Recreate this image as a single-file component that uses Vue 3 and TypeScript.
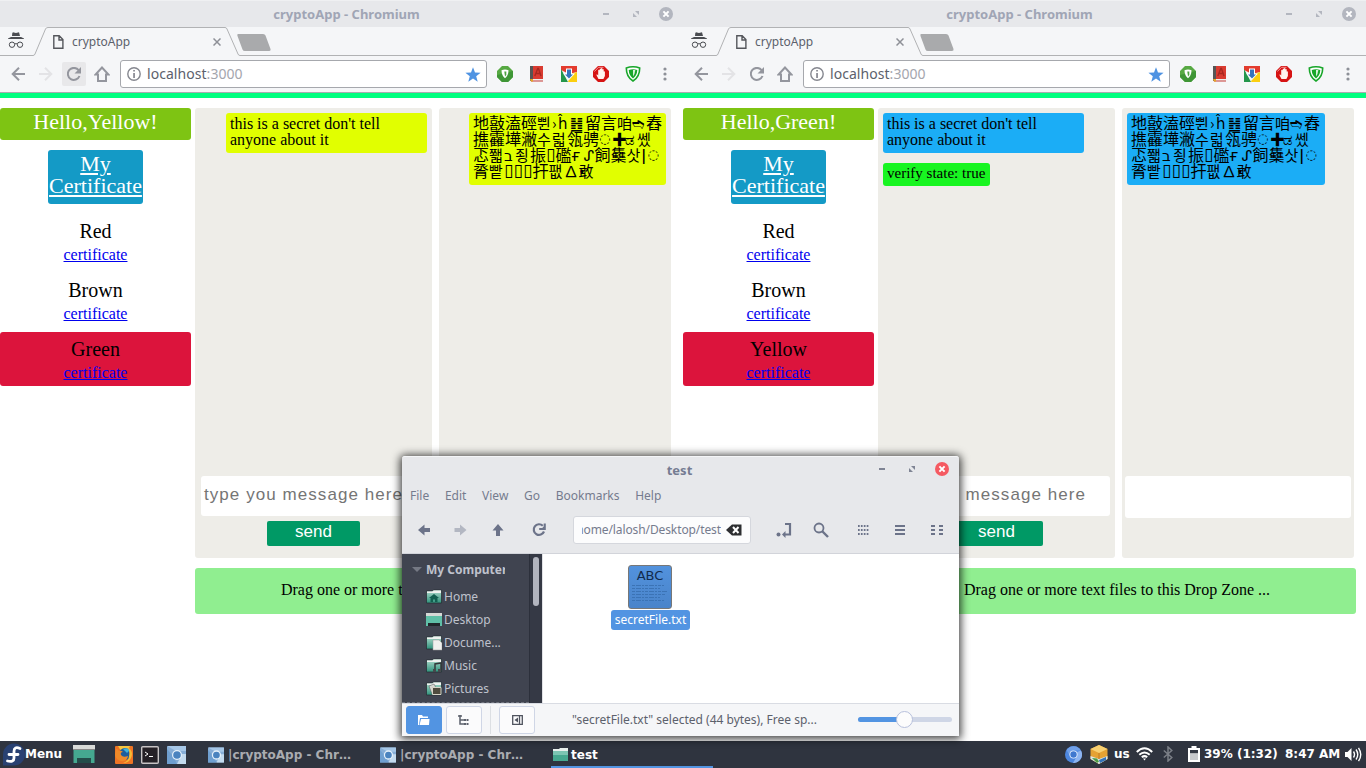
<script setup lang="ts">
interface Contact { name: string; active: boolean }
interface Win {
  user: string
  contacts: Contact[]
  mine: boolean
  verified: boolean
}
type Glyph = [string, number]

const windows: Win[] = [
  {
    user: 'Yellow',
    contacts: [{ name: 'Red', active: false }, { name: 'Brown', active: false }, { name: 'Green', active: true }],
    mine: true,
    verified: false,
  },
  {
    user: 'Green',
    contacts: [{ name: 'Red', active: false }, { name: 'Brown', active: false }, { name: 'Yellow', active: true }],
    mine: false,
    verified: true,
  },
]

// Each encrypted character with its advance width in pixels
const cipher: Glyph[][] = [
  [['地', 16], ['敼', 16], ['溘', 16], ['硜', 16], ['쀤', 15], ['›', 6], ['ĥ', 12], ['䷲', 15], ['留', 16], ['言', 16], ['咱', 15], ['➬', 14], ['舂', 16]],
  [['撨', 16], ['靃', 16], ['墷', 16], ['潎', 16], ['수', 15], ['럷', 15], ['瓴', 16], ['骋', 16], ['◌', 13], ['✚', 13], ['ಡ', 12], ['쎘', 15]],
  [['忑', 16], ['쫿', 15], ['ב', 11], ['죙', 15], ['振', 16], ['▯', 9.5], ['礛', 16], ['ғ', 12], ['ᔑ', 11], ['飼', 16], ['雧', 16], ['삿', 15], ['ǀ', 6], ['◌', 13]],
  [['脀', 16], ['빹', 15], ['▯', 9.5], ['▯', 9.5], ['▯', 9.5], ['扞', 16], ['팺', 15], ['∆', 11], ['·', 4], ['敢', 15]],
]

const places = ['Home', 'Desktop', 'Docume...', 'Music', 'Pictures']
const menus = ['File', 'Edit', 'View', 'Go', 'Bookmarks', 'Help']
const zoomLevel = 50
</script>

<template>
  <div class="desktop">
    <div class="browsers">
      <section v-for="w in windows" :key="w.user" class="browser">
        <header class="titlebar">
          <span class="wtitle">cryptoApp - Chromium</span>
          <svg class="wctl" width="80" height="18" viewBox="0 0 80 18">
            <rect x="3" y="8" width="6" height="2" fill="#b3b6bf" />
            <path d="M35 6h4v4zM33 8v4h4z" fill="#b3b6bf" />
            <circle cx="66" cy="9" r="7" fill="#b3b6bf" />
            <path d="M63.4 6.4l5.2 5.2M68.600 6.400l-5.200 5.200" stroke="#fff" stroke-width="2" />
          </svg>
        </header>
        <div class="tabs">
          <svg class="tabline" width="683" height="29" viewBox="0 0 683 29">
            <path d="M0 28.500H33Q34.500 28.500 35 27L45.500 2Q46 .5 48 .5H225Q226.500 .5 227 2L238 27Q238.500 28.500 240 28.500H683" fill="#f5f6f8" stroke="#b1b2b4" />
            <path d="M238 7H263Q265 7 265.500 8.500L270.500 22Q271 24 269 24H245Q243 24 242.500 22.500L237.500 9Q237 7 238 7Z" fill="#a9aaac" />
          </svg>
          <svg class="incog" width="16" height="17" viewBox="0 0 16 17" fill="none" stroke="#4b4d52">
            <path d="M4.300 1L5 .3 8 1 11 .3 12 4H4z" fill="#4b4d52" stroke="none" />
            <path d="M0 6.500L3 5H13L16 6.500V7H0z" fill="#4b4d52" stroke="none" />
            <circle cx="4" cy="12.700" r="2.700" /><circle cx="12" cy="12.700" r="2.700" /><path d="M6.700 12q1.300-.8 2.600 0" />
          </svg>
          <svg class="doc" width="11" height="14" viewBox="0 0 11 14" fill="none" stroke="#55575c" stroke-width="1.400">
            <path d="M.8.8H6.200L9.900 4.500V13.200H.8zM6 1V5H10" />
          </svg>
          <span class="tabname">cryptoApp</span>
          <svg class="tabx" width="8" height="8" viewBox="0 0 8 8"><path d="M.5.5l7 7M7.500.5l-7 7" stroke="#8e9097" stroke-width="1.500" /></svg>
        </div>
        <div class="toolbar">
          <svg class="i-back" width="14" height="14" viewBox="0 0 14 14" fill="none" stroke="#94969e" stroke-width="2"><path d="M14 7H1.500M8 .8L1.700 7 8 13.200" /></svg>
          <svg class="i-fwd" width="14" height="14" viewBox="0 0 14 14" fill="none" stroke="#e3e3e6" stroke-width="2"><path d="M0 7H12.500M6 .8L12.300 7 6 13.200" /></svg>
          <span class="reload" :class="{ hover: w.mine }">
            <svg width="14" height="14" viewBox="0 0 14 14"><path d="M11.600 3.200A6 6 0 1 0 12.500 9" fill="none" stroke="#94969e" stroke-width="2" /><path d="M14 0V6.500H7.500z" fill="#94969e" /></svg>
          </span>
          <svg class="i-home" width="16" height="16" viewBox="0 0 16 16" fill="none" stroke="#94969e" stroke-width="2"><path d="M8 1.500L1.500 8.500H4V15H12V8.500H14.500z" /></svg>
          <div class="url">
            <svg width="14" height="14" viewBox="0 0 14 14"><circle cx="7" cy="7" r="6.200" fill="none" stroke="#85878f" stroke-width="1.400" /><path d="M6.200 3h1.700v1.600H6.200zM6.200 6h1.700v5H6.200z" fill="#85878f" /></svg>
            <span class="host">localhost<i>:3000</i></span>
            <svg class="star" width="16" height="15" viewBox="0 0 16 15"><path d="M8 .3L10 5.500 15.600 5.800 11.200 9.300 12.700 14.700 8 11.600 3.300 14.700 4.800 9.300.4 5.800 6 5.500z" fill="#4f93e2" /></svg>
          </div>
          <div class="exts">
            <svg width="16" height="16" viewBox="0 0 16 16"><path d="M5 0h6l5 5v6l-5 5H5l-5-5V5z" fill="#57a943" /><path d="M0 9l16-4v6l-5 5H5l-5-5z" fill="#3f9636" /><path d="M4.500 4.200q3.500-1.200 7 0 0 5-3.500 8Q4.500 9.200 4.500 4.200z" fill="#fff" /><path d="M7.300 5.500h2V9L8 10.500z" fill="#4ba33e" /></svg>
            <svg width="16" height="16" viewBox="0 0 16 16"><path d="M1 0h13v13H3l-2 2z" fill="#d93b31" /><path d="M1 0h3v13L1 15z" fill="#555" /><path d="M2 13h12v1.500H3z" fill="#eee" /><path d="M2 14.500h12v1H2z" fill="#c43b34" /><path d="M5.800 10L8.800 2.500h.6L12 10M6.800 7.500h4.400" fill="none" stroke="#a82820" stroke-width="1.400" /><path d="M1 13h3v2.500H2z" fill="#e8a724" /></svg>
            <svg width="16" height="16" viewBox="0 0 16 16"><path d="M0 0h16v6L8 8 0 4z" fill="#e33b2e" /><path d="M0 3l7 13H0z" fill="#23964b" /><path d="M16 6v10H7l3-8z" fill="#fbcf10" /><path d="M5 2.500h6v5h3L8 14 2 7.500h3z" fill="#fff" /><path d="M6 3.500h4v5h2L8 12.500 4 8.500h2z" fill="#3674bb" /></svg>
            <svg width="16" height="16" viewBox="0 0 16 16"><path d="M5 0h6l5 5v6l-5 5H5l-5-5V5z" fill="#d61414" /><path d="M1.300 5.600L5.500 1.300h5" fill="none" stroke="#f39494" /><path d="M5.500 13L3.300 8.800q1-.8 1.900.8V4.500q0-.8.7-.8t.8.8V3q.7-.8 1.300 0v-.5q.8-.8 1.400 0v1q.7-.8 1.300 0v2q.7-.6 1.200.2V10l-1.500 3z" fill="#fff4f0" /></svg>
            <svg width="16" height="16" viewBox="0 0 16 16"><path d="M1.300 2Q8-.4 14.700 2 14.700 11 8 15 1.300 11 1.300 2z" fill="#fff" stroke="#18a62a" stroke-width="1.600" /><path d="M3.700 4Q8 2.600 12.300 4 12 9.500 8 12.500 4 9.500 3.700 4z" fill="#18a62a" /><path d="M8 4h2.300Q10 8 8 10.500z" fill="#d7f1d8" /></svg>
          </div>
          <svg class="dots" width="4" height="14" viewBox="0 0 4 14" fill="#8d9098"><circle cx="2" cy="2" r="1.600" /><circle cx="2" cy="7" r="1.600" /><circle cx="2" cy="12" r="1.600" /></svg>
        </div>
        <div class="accent"></div>
        <main class="page">
          <aside class="people">
            <div class="hello">Hello,{{ w.user }}!</div>
            <a class="mycert">My<br>Certificate</a>
            <div v-for="c in w.contacts" :key="c.name" class="contact" :class="{ active: c.active }">
              <div class="cname">{{ c.name }}</div>
              <a class="cert">certificate</a>
            </div>
          </aside>
          <div class="work">
            <div class="columns">
              <div class="chat">
                <div class="bubble" :class="w.mine ? 'own' : 'theirs'">this is a secret don't tell<br>anyone about it</div>
                <div v-if="w.verified" class="verify">verify state: true</div>
                <div class="field">type you message here</div>
                <div class="send">send</div>
              </div>
              <div class="secret">
                <div class="cbubble" :class="w.mine ? 'own' : 'theirs'">
                  <div v-for="(line, li) in cipher" :key="li" class="cline">
                    <span v-for="(g, gi) in line" :key="gi" :class="{ narrow: g[1] < 16, box: g[0] === '▯', ring: g[0] === '◌' }" :style="{ width: g[1] + 'px' }">{{ g[0] }}</span>
                  </div>
                </div>
                <div class="blank"></div>
              </div>
            </div>
            <div class="drop">Drag one or more text files to this Drop Zone ...</div>
          </div>
        </main>
      </section>
    </div>

    <section class="files">
      <header class="ftitle">
        <span>test</span>
        <svg class="fctl" width="80" height="18" viewBox="0 0 80 18">
          <rect x="3" y="8" width="6" height="2" fill="#7f8494" />
          <path d="M35 6h4v4zM33 8v4h4z" fill="#7f8494" />
          <circle cx="66" cy="9" r="7" fill="#f55a62" />
          <path d="M63.400 6.400l5.200 5.200M68.600 6.400l-5.200 5.200" stroke="#fff" stroke-width="2" />
        </svg>
      </header>
      <nav class="fmenu"><span v-for="m in menus" :key="m">{{ m }}</span></nav>
      <div class="ftools">
        <svg width="18" height="18" viewBox="0 0 18 18" class="t1"><path d="M3 9l6.500-5.500V7H15v4H9.500v3.500z" fill="#6c7389" /></svg>
        <svg width="18" height="18" viewBox="0 0 18 18" class="t2"><path d="M15.500 9L9 3.500V7H3.500v4H9v3.500z" fill="#b3b7c2" /></svg>
        <svg width="18" height="18" viewBox="0 0 18 18" class="t3"><path d="M9 3l5.500 6.500H11V15H7V9.500H3.500z" fill="#6c7389" /></svg>
        <svg width="18" height="18" viewBox="0 0 18 18" class="t4"><path d="M12.800 4.800A5.300 5.300 0 1 0 14 10.500" fill="none" stroke="#6c7389" stroke-width="2.200" /><path d="M15.800 2.500V9H9.200V7h3l1.500-1.500v-3z" fill="#6c7389" /></svg>
        <div class="path">
          <span class="clip"><span>home/lalosh/Desktop/test</span></span>
          <svg width="16" height="12" viewBox="0 0 16 12"><path d="M0 6L6 .5H15.500V11.500H6z" fill="#2d2e31" /><path d="M7 3l5.500 6M12.500 3L7 9" stroke="#fff" stroke-width="2" /></svg>
        </div>
        <svg width="18" height="18" viewBox="0 0 18 18" class="t5"><path d="M10 3H15V13.500H9" fill="none" stroke="#6c7389" stroke-width="2.200" /><path d="M10.500 10v7L7 13.500z" fill="#6c7389" /><circle cx="3.500" cy="13.500" r="2" fill="#6c7389" /></svg>
        <svg width="18" height="18" viewBox="0 0 18 18" class="t6"><circle cx="7" cy="7" r="4.500" fill="none" stroke="#6c7389" stroke-width="1.800" /><path d="M10 10l6 6" stroke="#6c7389" stroke-width="2.400" /></svg>
        <svg width="18" height="18" viewBox="0 0 18 18" class="t7"><path d="M4 5h10.400M4 9h10.400M4 13h10.400" stroke="#6c7389" stroke-width="2" stroke-dasharray="1.700 1.200" /></svg>
        <svg width="18" height="18" viewBox="0 0 18 18" class="t6"><path d="M4 5h10M4 9h10M4 13h10" stroke="#6c7389" stroke-width="2" /></svg>
        <svg width="18" height="18" viewBox="0 0 18 18" class="t6"><path d="M3 5h4M3 9h4M3 13h4M11 5h4M11 9h4M11 13h4" stroke="#6c7389" stroke-width="2" /></svg>
      </div>
      <div class="fbody">
        <aside class="side">
          <div class="shead"><i></i><b>My Computer</b></div>
          <div v-for="(p, i) in places" :key="p" class="place">
            <svg width="16" height="16" viewBox="0 0 16 16">
              <defs><linearGradient :id="'fg' + i" x1="0" y1="0" x2="0" y2="1"><stop offset="0" stop-color="#b4ded0" /><stop offset="1" stop-color="#2f927c" /></linearGradient></defs>
              <path v-if="i === 1" d="M0 1h16v13h-2v-3H3v3H0z" fill="#5fbfa7" />
              <path v-if="i === 1" d="M0 1h16v3H0z" fill="#d6d8d6" />
              <path v-if="i === 1" d="M2 11h12v3H2z" fill="#21272b" />
              <path v-if="i !== 1" d="M.5 2h6l1-1h8v13H.5z" :fill="`url(#fg${i})`" stroke="#24292f" stroke-width=".7" />
              <path v-if="i !== 1" d="M1 2.500h5.500l1-1H15V4H1z" fill="#f0f2f0" />
              <path v-if="i === 0" d="M8 5l5 4h-1.500v4H9v-2.500H7V13H4.500V9H3z" fill="#126050" />
              <path v-if="i === 2" d="M7 5h6l3 3v7H7z" fill="#f0f0ee" stroke="#999" stroke-width=".5" />
              <path v-if="i === 3" d="M9 12V6l6-1v7" fill="none" stroke="#33383a" stroke-width="1.500" />
              <path v-if="i === 3" d="M7 11h3v3H7zM12 11h3v3h-3z" fill="#454a4d" />
              <path v-if="i === 4" d="M3 5l5-2 3 6-5 4z" fill="#d8d8d2" stroke="#555" stroke-width=".5" />
              <path v-if="i === 4" d="M6.500 6.500h8.500v7H6.500z" fill="#4f4b3e" stroke="#d8d5c9" />
            </svg>
            <span>{{ p }}</span>
          </div>
        </aside>
        <div class="scroll"><i></i></div>
        <div class="pane">
          <div class="file">
            <div class="thumb"><b>ABC</b>
              <svg width="36" height="24" viewBox="0 0 36 24"><path d="M0 2.500h32M0 5.500h28M0 8.500h36M0 11.500h33M0 14.500h28M0 17.500h32" stroke="#3b73b5" stroke-width="1" stroke-dasharray="3 1 5 1 2 1" /></svg>
            </div>
            <span class="fname">secretFile.txt</span>
          </div>
        </div>
      </div>
      <footer class="fstatus">
        <span class="sb on"><svg width="12" height="10" viewBox="0 0 12 10"><path d="M1 10H0V0h4l1 1.500h5V3H2z" fill="#fff" /><path d="M3 4h8.500L11 10H1.500z" fill="#fff" /></svg></span>
        <span class="sb"><svg width="12" height="11" viewBox="0 0 12 11"><path d="M0 1h4M2 0V9H7M2 5H7" fill="none" stroke="#5c616c" stroke-width="1.500" /><path d="M6 4h2.500v2H6zM9 4h1.500v2H9zM6 8h2.500v2H6zM9 8h1.500v2H9z" fill="#5c616c" /></svg></span>
        <span class="vsep"></span>
        <span class="sb"><svg width="11" height="10" viewBox="0 0 11 10"><path d="M.7.700H10.300V9.300H.7zM7.500 1V9" fill="none" stroke="#50545f" stroke-width="1.300" /><path d="M6 2.500v5L2.500 5z" fill="#50545f" /></svg></span>
        <span class="stext">"secretFile.txt" selected (44 bytes), Free sp...</span>
        <span class="slider"><i :style="{ width: zoomLevel + '%' }"></i><b></b></span>
      </footer>
    </section>

    <footer class="taskbar">
      <svg class="fed" width="22" height="23" viewBox="0 0 22 23"><path d="M0 11.500A11 11 0 1 1 11 22.500H0z" fill="#294172" /><path d="M17 5.500q-6-2.500-6 3V15q0 4.500-6.500 3M6 11.500h9" fill="none" stroke="#fff" stroke-width="2.800" stroke-linecap="round" /></svg>
      <b class="menu">Menu</b>
      <svg class="desk" width="22" height="18" viewBox="0 0 22 18"><path d="M.5.500h21V18H.5z" fill="#45a890" /><path d="M0 0h22v4H0z" fill="#d8dad8" /><path d="M0 4h22v1H0z" fill="#888" /><path d="M4 13h14v5H4z" fill="#244d4a" /></svg>
      <svg class="fox" width="18" height="18" viewBox="0 0 18 18"><rect width="18" height="18" rx="1" fill="#ee7425" /><path d="M3 0h12l-2 4-7 1z" fill="#f8c63e" /><circle cx="10" cy="8" r="6" fill="#1e5d9c" /><path d="M8 3q4-2 7 1l-3 3z" fill="#43b2d8" /><path d="M1 3q2 0 3 2 2-1 4 1-3 0-2 3 2 3 7 1-1 6-7 5-5-1-6-6z" fill="#f08a28" /><path d="M13 1q6 5 3 11-2 5-8 5 6-2 6-7 1-4-1-9z" fill="#f6bb34" /></svg>
      <svg class="term" width="18" height="18" viewBox="0 0 18 18"><rect x=".7" y=".7" width="16.600" height="16.600" rx="1" fill="#242026" stroke="#c7c3c5" stroke-width="1.400" /><path d="M4 6l3 2-3 2M8 10.500h4" fill="none" stroke="#fff" /></svg>
      <svg class="chr" width="19" height="18" viewBox="0 0 19 18"><rect width="19" height="18" rx="1" fill="#86add6" /><path d="M0 0h19v5H9z" fill="#a6c7e7" /><path d="M0 3l6 7 4 8H0z" fill="#6f9fd0" /><path d="M15 8h4v10h-9z" fill="#c4dbef" /><circle cx="10" cy="9" r="5" fill="#e5f0fa" /><circle cx="10" cy="9" r="3.800" fill="#4a83bf" /></svg>
      <div v-for="n in 2" :key="n" class="task">
        <svg width="16" height="16" viewBox="0 0 19 18"><rect width="19" height="18" rx="1" fill="#86add6" /><path d="M0 0h19v5H9z" fill="#a6c7e7" /><path d="M0 3l6 7 4 8H0z" fill="#6f9fd0" /><path d="M15 8h4v10h-9z" fill="#c4dbef" /><circle cx="10" cy="9" r="5.500" fill="#e5f0fa" /><circle cx="10" cy="9" r="4" fill="#4a83bf" /></svg>
        <b>|cryptoApp - Chr…</b>
      </div>
      <div class="task cur">
        <svg width="15" height="13" viewBox="0 0 15 13"><path d="M0 1h6l1-1h8v13H0z" fill="#e8efec" /><path d="M0 3h15v10H0z" fill="#46a88f" /><path d="M0 3h15v4H0z" fill="#7cc5b2" /></svg>
        <b>test</b>
      </div>
      <div class="tray">
        <svg width="17" height="17" viewBox="0 0 17 17" class="y1"><circle cx="8.500" cy="8.500" r="8.500" fill="#4c86df" /><path d="M1.500 4A8.500 8.500 0 0 1 16 4.500H8.500L5 10z" fill="#6f9fe8" /><path d="M16 4.500A8.500 8.500 0 0 1 8 17l4-7V6z" fill="#8db4f0" /><circle cx="8.500" cy="8.500" r="4" fill="#eef5ff" /><circle cx="8.500" cy="8.500" r="3.200" fill="#3f78cf" /></svg>
        <svg width="18" height="19" viewBox="0 0 18 19" class="y2"><path d="M9 0l8.500 4V14L9 19 .5 14V4z" fill="#e5a233" /><path d="M9 0l8.500 4L9 8 .5 4z" fill="#f8d071" /><path d="M.5 11L9 14l8.500-3v3L9 19 .5 14z" fill="#dce6e8" /><path d="M2 13l5 .5 2 3-2 1.500z" fill="#4f9b45" /><path d="M9 15l7-3v3l-6 3z" fill="#3473b8" /><path d="M9 8v6" stroke="#c37b20" /></svg>
        <b class="y3">us</b>
        <svg width="17" height="14" viewBox="0 0 17 14" class="y4" fill="none" stroke="#fff" stroke-width="2"><path d="M.8 5Q8.500-2.500 16.200 5M3.300 7.700q5.200-4.500 10.400 0M5.800 10.300q2.700-2.300 5.400 0" /><path d="M7 11.500h3l-1.500 2z" fill="#fff" stroke="none" /></svg>
        <svg width="10" height="16" viewBox="0 0 10 16" class="y5" fill="none" stroke="#7b7f87" stroke-width="1.500"><path d="M.8 4.500L8.800 11.500 5 15V1L8.800 4.500.8 11.500" /></svg>
        <svg width="12" height="16" viewBox="0 0 12 16" class="y6"><path d="M3.500 0h5v2H12v14H0V2h3.500z" fill="#fff" /><path d="M2 4h8v3.500H2z" fill="#343944" /><path d="M2 7.500h8V14H2z" fill="#c8cacd" /></svg>
        <b class="y7">39% (1:32)</b>
        <b class="y8">8:47 AM</b>
        <svg width="17" height="15" viewBox="0 0 17 15" class="y9"><path d="M0 5h2.500L6.500 1v13L2.500 10H0z" fill="#fff" /><path d="M8.500 4.500q2 3 0 6M11 2.500q3.500 5 0 10M13.500.8q4.500 6.700 0 13.400" fill="none" stroke="#fff" stroke-width="1.400" /></svg>
      </div>
    </footer>
  </div>
</template>

<style>
html, body { margin: 0; overflow: hidden; }
</style>

<style scoped>
.desktop { position: relative; width: 1366px; height: 768px; overflow: hidden; background: #fff; display: flex; flex-direction: column; font-family: "Noto Sans", sans-serif; }
.desktop svg { display: block; flex: none; }
.browsers { display: flex; height: 741px; }
.browser { width: 683px; height: 741px; flex: none; }
.titlebar { height: 27px; box-sizing: border-box; border-top: 1px solid #eff0f2; background: #e7e8eb; display: flex; align-items: center; padding-left: 10px; }
.wtitle { flex: 1; text-align: center; font-weight: 700; font-size: 13px; line-height: 18px; color: #a0a5b5; padding-left: 83px; margin-top: -1px; }
.browser:nth-child(2) .wtitle { padding-left: 63px; }
.wctl { margin-right: 3px; margin-top: -1px; }
.tabs { position: relative; height: 29px; display: flex; background: #f5f6f8; }
.tabs > * { position: relative; }
.tabs > .tabline { position: absolute; left: 0; top: 0; }
.incog { margin: 5px 0 0 8px; }
.doc { margin: 8px 0 0 29px; }
.tabname { font-size: 12px; line-height: 17px; margin: 6px 0 0 8px; width: 141px; color: #5c616c; }
.tabx { margin-top: 11px; }
.toolbar { height: 37px; box-sizing: border-box; border-bottom: 1px solid #a8abaf; background: #f5f6f8; display: flex; align-items: center; }
.i-back { margin-left: 11px; }
.i-fwd { margin-left: 14px; }
.reload { width: 24px; height: 24px; margin-left: 9px; border-radius: 2px; display: flex; align-items: center; justify-content: center; }
.reload.hover { background: #e8e8ea; }
.i-home { margin-left: 8px; }
.url { margin-left: 10px; width: 367px; height: 28px; box-sizing: border-box; border: 1px solid #a6a8ad; border-radius: 3px; background: #fff; display: flex; align-items: center; padding: 0 5px 0 6px; }
.host { flex: 1; font-size: 14px; line-height: 20px; margin-left: 6px; letter-spacing: .05px; color: #5c616c; }
.host i { font-style: normal; color: #a4a6ad; }
.exts { display: flex; gap: 16px; margin-left: 10px; }
.dots { margin-left: 22px; }
.accent { height: 5px; background: #00ff7f; }
.page { display: flex; font-family: "Liberation Serif", serif; color: #000; padding-top: 10px; }
.people { width: 191px; display: flex; flex-direction: column; align-items: center; text-align: center; }
.hello { width: 191px; height: 32px; border-radius: 3px; background: #7ec413; color: #fff; font-size: 22px; line-height: 28px; }
.mycert { width: 95px; height: 54px; box-sizing: border-box; padding-top: 3px; margin: 10px 0 10px; border-radius: 3px; background: #149ac6; color: #fff; text-decoration: underline; font-size: 22px; line-height: 22px; }
.contact { width: 191px; height: 54px; box-sizing: border-box; padding-top: 5px; margin-bottom: 5px; border-radius: 3px; }
.contact.active { background: #dc143c; }
.cname { font-size: 20px; line-height: 24px; }
.cert { display: block; font-size: 16px; line-height: 24px; color: #0000ee; text-decoration: underline; }
.work { margin-left: 4px; width: 478px; }
.columns { display: flex; gap: 7px; height: 450px; }
.chat, .secret { background: #eeede8; border-radius: 3px; display: flex; flex-direction: column; box-sizing: border-box; }
.chat { width: 237px; padding: 5px; }
.secret { width: 232px; padding: 5px 3px 0; }
.bubble { width: 201px; height: 40px; box-sizing: border-box; padding: 3px 4px; border-radius: 3px; font-size: 16px; line-height: 16px; white-space: nowrap; }
.own { background: #e1ff00; align-self: flex-end; }
.theirs { background: #1badf6; align-self: flex-start; }
.verify { width: 107px; height: 23px; margin-top: 10px; box-sizing: border-box; padding: 0 4px; border-radius: 3px; background: #18f521; font-size: 15px; line-height: 21px; white-space: nowrap; align-self: flex-start; }
.field { width: 226px; height: 40px; margin: auto 0 0 1px; box-sizing: border-box; padding-left: 3px; border-radius: 3px; background: #fff; color: #757575; font-family: "Liberation Sans", sans-serif; font-size: 17px; line-height: 37px; letter-spacing: 1.06px; white-space: nowrap; }
.send { width: 93px; height: 25px; margin: 5px auto 7px 67px; border-radius: 2px; background: #009965; color: #fff; font-family: "Liberation Sans", sans-serif; font-size: 17px; line-height: 22px; text-align: center; }
.cbubble { width: 197px; height: 72px; box-sizing: border-box; padding: 3px 0 0 4px; margin: 0 2px; border-radius: 3px; font: 16px/16px "Noto Sans CJK SC", "Noto Sans CJK KR", "DejaVu Sans", sans-serif; }
.cbubble.theirs { width: 198px; }
.cline { display: flex; height: 16px; white-space: nowrap; }
.cline span { flex: none; line-height: 13px; }
.cline .narrow { font-size: 15px; }
.cline .box { font: 17px/13px "DejaVu Sans", sans-serif; }
.cline .ring { font: 13px/13px "DejaVu Sans", sans-serif; }
.blank { height: 42px; width: 226px; margin: auto 0 40px 0; border-radius: 3px; background: #fff; }
.drop { margin-top: 10px; height: 46px; border-radius: 3px; background: #90ee90; text-align: center; font-size: 16px; line-height: 44px; }

.files { position: absolute; left: 402px; top: 456px; width: 557px; height: 280px; border-radius: 3px 3px 0 0; background: #e7e8eb; box-shadow: 0 1px 9px 2px rgba(0, 0, 0, .75); display: flex; flex-direction: column; overflow: visible; }
.ftitle { height: 27px; box-sizing: border-box; border-top: 1px solid #f5f6f8; border-radius: 3px 3px 0 0; display: flex; color: #757c92; font-weight: 700; font-size: 13px; line-height: 27px; }
.ftitle span { flex: 1; text-align: center; padding-left: 81px; }
.fctl { margin: 3px 3px 0 0; width: 80px; }
.fmenu { display: flex; height: 25px; padding-left: 8px; gap: 15.7px; font-size: 12px; line-height: 25px; color: #757b8e; }
.ftools { display: flex; align-items: center; height: 46px; box-sizing: border-box; border-bottom: 1px solid #d2d4da; padding-left: 13px; padding-bottom: 1px; }
.t2 { margin-left: 18px; }
.t3 { margin-left: 20px; }
.t4 { margin-left: 23px; }
.t5 { margin-left: 24px; }
.t6 { margin-left: 19px; }
.t7 { margin-left: 24px; }
.path { margin-left: 25px; width: 178px; height: 28px; box-sizing: border-box; border: 1px solid #d5d7dd; border-radius: 3px; background: #fcfcfd; display: flex; align-items: center; padding-left: 8px; color: #757b8e; font-size: 12px; }
.clip { width: 139px; margin-right: 5px; overflow: hidden; display: flex; justify-content: flex-end; white-space: nowrap; line-height: 18px; letter-spacing: -.1px; }
.fbody { height: 149px; display: flex; }
.side { width: 127px; height: 149px; box-sizing: border-box; background: #404450; border-bottom: 1px dashed #70747e; color: #bfc2cc; font-size: 12px; overflow: hidden; }
.shead { display: flex; align-items: center; height: 31px; width: 103px; overflow: hidden; white-space: nowrap; padding-left: 10px; box-sizing: border-box; }
.shead b { overflow: hidden; }
.shead i { border: 5px solid transparent; border-top-color: #757984; border-bottom: 0; margin-right: 4px; flex: none; }
.place { height: 23px; display: flex; align-items: center; gap: 2px; padding-left: 24px; }
.scroll { width: 13px; background: #353945; box-sizing: border-box; border-left: 1px solid #2c303b; }
.scroll i { display: block; width: 6px; height: 49px; margin: 3px 0 0 3px; border-radius: 3px; background: #b2b5bf; }
.pane { flex: 1; background: #fff; border-left: 1px solid #e1e2e6; }
.file { width: 79px; margin: 11px 0 0 68px; display: flex; flex-direction: column; align-items: center; }
.thumb { width: 44px; height: 44px; box-sizing: border-box; border: 1px solid #777; border-radius: 3px; background: linear-gradient(#5292dd, #4a84ca); padding: 3px 3px 0; margin-right: 1px; }
.thumb b { display: block; text-align: center; font: 13px/14px "DejaVu Sans", sans-serif; color: #112b4c; }
.fname { width: 79px; height: 20px; margin-top: 1px; border-radius: 3px; background: #5294e2; color: #fff; font-size: 12px; line-height: 19px; text-align: center; }
.fstatus { height: 33px; box-sizing: border-box; border-top: 1px solid #d9dce3; background: #f5f6f8; display: flex; align-items: center; padding-left: 4px; color: #5c616c; font-size: 12px; }
.sb { width: 36px; height: 28px; box-sizing: border-box; border: 1px solid #cfd6e6; border-radius: 3px; background: #fbfbfc; display: flex; align-items: center; justify-content: center; margin-right: 4px; }
.sb.on { background: #5294e2; border-color: #5294e2; }
.vsep { width: 1px; height: 28px; background: #dcdfe3; margin: 0 8px 0 4px; }
.stext { margin-left: 33px; width: 286px; white-space: nowrap; padding-bottom: 2px; }
.slider { position: relative; width: 94px; height: 5px; margin-top: -1px; border-radius: 3px; background: #cfd6e6; }
.slider i { display: block; height: 5px; border-radius: 3px; background: #5294e2; }
.slider b { position: absolute; left: 38px; top: -6px; width: 15px; height: 15px; border: 1px solid #b7c0dc; border-radius: 50%; background: #fcfcfc; }

.taskbar { height: 27px; background: #2f343f; display: flex; align-items: center; color: #fff; font-family: "DejaVu Sans", sans-serif; font-size: 12px; line-height: 26px; white-space: nowrap; }
.fed { margin-left: 3px; }
.menu { width: 48px; margin-top: -2px; }
.desk { margin-top: -1px; }
.fox { margin: 1px 0 0 20px; }
.term { margin: 1px 0 0 8px; }
.chr { margin: 1px 22px 0 8px; }
.task { width: 172px; height: 27px; display: flex; align-items: center; gap: 4px; color: #aaacb1; }
.cur { width: 162px; padding: 2px 0 0 2px; box-sizing: border-box; border-bottom: 2px solid #5294e2; color: #fff; gap: 3px; margin-left: -1px; }
.tray { margin-left: auto; display: flex; align-items: center; width: 309px; height: 27px; padding-bottom: 1px; box-sizing: border-box; }
.y1 { margin-left: 8px; }
.y2 { margin-left: 8px; }
.y3 { margin-left: 6px; width: 16px; }
.y4 { margin-left: 6px; }
.y5 { margin-left: 10px; }
.y6 { margin-left: 15px; }
.y7 { margin-left: 4px; width: 74px; }
.y8 { margin-left: 7px; width: 55px; }
.y9 { margin-left: 5px; }
</style>
